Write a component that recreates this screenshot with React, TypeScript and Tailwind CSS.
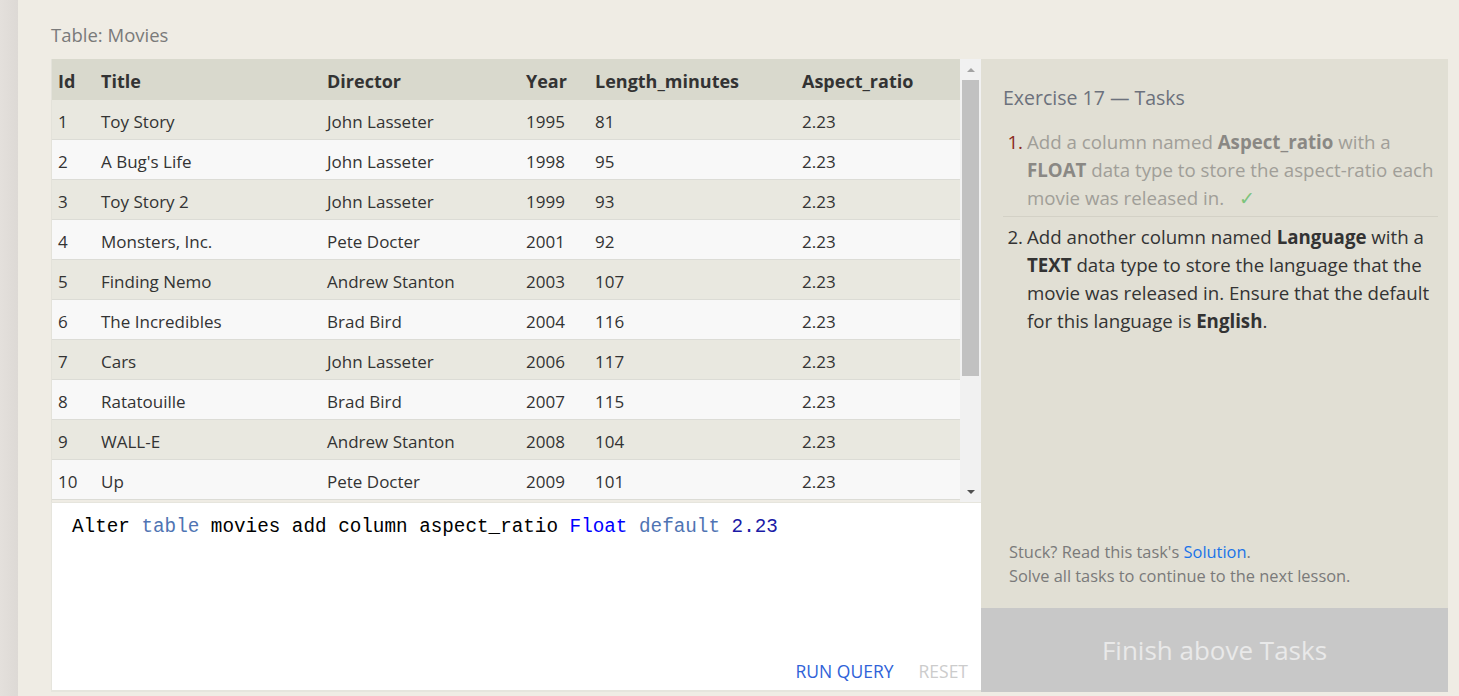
const movies = [
  [1, "Toy Story", "John Lasseter", 1995, 81],
  [2, "A Bug's Life", "John Lasseter", 1998, 95],
  [3, "Toy Story 2", "John Lasseter", 1999, 93],
  [4, "Monsters, Inc.", "Pete Docter", 2001, 92],
  [5, "Finding Nemo", "Andrew Stanton", 2003, 107],
  [6, "The Incredibles", "Brad Bird", 2004, 116],
  [7, "Cars", "John Lasseter", 2006, 117],
  [8, "Ratatouille", "Brad Bird", 2007, 115],
  [9, "WALL-E", "Andrew Stanton", 2008, 104],
  [10, "Up", "Pete Docter", 2009, 101],
];

const cols = ["w-[43px]", "w-[226px]", "w-[199px]", "w-[69px]", "w-[207px]", "w-[166px]"];

function Row({ cells, head, odd }: { cells: (string | number)[]; head?: boolean; odd?: boolean }) {
  return (
    <div
      className={
        "flex items-center pt-[4px] " +
        (head
          ? "h-[41px] bg-[#d9d9cd] font-bold text-[18px] text-[#333]"
          : "h-[40px] border-b border-[#dcdcd6] text-[17px] text-[#333] " +
            (odd ? "bg-[#e9e8e0]" : "bg-[#f8f8f8]"))
      }
    >
      {cells.map((c, i) => (
        <div key={i} className={cols[i] + " shrink-0 pl-[6px] whitespace-nowrap"}>
          {c}
        </div>
      ))}
    </div>
  );
}

export default function App() {
  return (
    <div
      className="flex h-[696px] w-full overflow-hidden bg-[#efece4]"
      style={{ fontFamily: '"Open Sans", "Noto Sans", sans-serif' }}
    >
      <div className="w-[18px] shrink-0 bg-gradient-to-r from-[#e4e0dc] to-[#ddd9d5]" />

      <div className="flex flex-1 flex-col pl-[33px]">
        <div className="flex h-[59px] items-center pt-[10px] text-[18.5px] text-[#7a7a7a]">Table: Movies</div>

        <div className="flex">
          {/* left: table + editor */}
          <div className="flex w-[930px] flex-col">
            <div className="flex h-[443px] border-l border-[#e3e2da]">
              <div className="w-[909px] overflow-hidden">
                <Row head cells={["Id", "Title", "Director", "Year", "Length_minutes", "Aspect_ratio"]} />
                {movies.map((m, i) => (
                  <Row key={i} odd={i % 2 === 0} cells={[...m, "2.23"]} />
                ))}
              </div>
              {/* scrollbar */}
              <div className="flex w-[21px] flex-col items-center bg-[#f1f1f1]">
                <div className="flex h-[21px] items-center justify-center">
                  <div className="h-0 w-0 border-x-[4px] border-b-[4px] border-x-transparent border-b-[#a3a3a3]" />
                </div>
                <div className="h-[296px] w-[17px] bg-[#c1c1c1]" />
                <div className="flex-1" />
                <div className="flex h-[21px] items-center justify-center">
                  <div className="h-0 w-0 border-x-[4px] border-t-[4px] border-x-transparent border-t-[#505050]" />
                </div>
              </div>
            </div>

            <div className="flex h-[190px] flex-col border-b-[2px] border-l border-t border-[#e6e5dd] bg-white">
              <div
                className="whitespace-pre pl-[20px] pt-[10px] text-[19.3px] text-black"
                style={{ fontFamily: '"Liberation Mono", "DejaVu Sans Mono", monospace' }}
              >
                Alter <span className="text-[#4f74b3]">table</span> movies add column aspect_ratio{" "}
                <span className="text-[#0000ff]">Float</span> <span className="text-[#4f74b3]">default</span>{" "}
                <span className="text-[#1a1aa6]">2.23</span>
              </div>
              <div className="flex-1" />
              <div className="flex justify-end gap-[25px] pb-[6px] pr-[13px] text-[17.5px]">
                <span className="text-[#2f62d8]">RUN QUERY</span>
                <span className="text-[#cccccc]">RESET</span>
              </div>
            </div>
          </div>

          {/* right: tasks */}
          <div className="flex h-[633px] w-[467px] flex-col bg-[#e1dfd4]">
            <div className="flex flex-1 flex-col pl-[22px] pr-[10px] pt-[24px]">
              <div className="text-[19.5px] text-[#6c717c]">Exercise 17 — Tasks</div>
              <ol className="mt-[16px] text-[18.7px] leading-[28px]">
                <li className="flex border-b border-[#d3d1c6] pb-[4px]">
                  <span className="w-[24px] shrink-0 text-right pr-[4px] text-[#8a2a20]">1.</span>
                  <span className="text-[#a09e98]">
                    Add a column named <b className="text-[#8a8884]">Aspect_ratio</b> with a{" "}
                    <b className="text-[#8a8884]">FLOAT</b> data type to store the aspect-ratio each movie was released
                    in. <span className="ml-[10px] text-[#7cc47c]">✓</span>
                  </span>
                </li>
                <li className="flex pt-[6px] text-[#333]">
                  <span className="w-[24px] shrink-0 text-right pr-[4px]">2.</span>
                  <span>
                    Add another column named <b>Language</b> with a <b>TEXT</b> data type to store the language that
                    the movie was released in. Ensure that the default for this language is <b>English</b>.
                  </span>
                </li>
              </ol>
              <div className="flex-1" />
              <div className="pb-[20px] pl-[6px] text-[16.4px] leading-[24px] text-[#7a7a7a]">
                <div>
                  Stuck? Read this task's <span className="text-[#1a73e8]">Solution</span>.
                </div>
                <div>Solve all tasks to continue to the next lesson.</div>
              </div>
            </div>
            <div className="flex h-[84px] items-center justify-center bg-[#c8c8c8] text-[26px] text-[#e9e9e9]">
              Finish above Tasks
            </div>
          </div>
        </div>
      </div>
    </div>
  );
}
